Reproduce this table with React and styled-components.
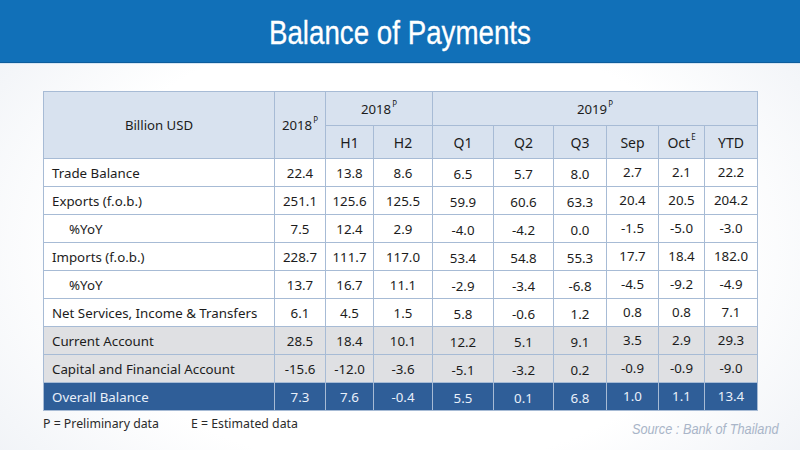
import React from 'react'
import styled, { createGlobalStyle } from 'styled-components'

const GlobalStyle = createGlobalStyle`
  html, body {
    margin: 0;
    padding: 0;
  }
  body {
    font-family: "Noto Sans", "DejaVu Sans", sans-serif;
    color: #1c1c1c;
  }
`

const Page = styled.div`
  width: 800px;
  height: 450px;
  overflow: hidden;
  display: flex;
  flex-direction: column;
  background: radial-gradient(ellipse 75% 90% at 50% 55%, #ffffff 55%, #e9edf3 100%);
`

const TitleBar = styled.header`
  height: 62px;
  flex: none;
  background: #1170b8;
  border-bottom: 1px solid #0d5d9c;
  box-shadow: 0 1px 0 #d6e6f4;
  display: flex;
  align-items: center;
  justify-content: center;
`

const Title = styled.h1`
  margin: 0;
  font-family: "Liberation Sans", Arial, sans-serif;
  font-weight: 400;
  font-size: 33px;
  color: #ffffff;
  transform: scaleX(0.84);
  line-height: 1;
  padding-top: 2px;
  -webkit-text-stroke: 0.3px #ffffff;
`

const Content = styled.main`
  flex: 1;
  padding: 28px 21px 0 43px;
  display: flex;
  flex-direction: column;
`

const Table = styled.table`
  width: 714px;
  border-collapse: collapse;
  table-layout: fixed;
  border: 1px solid #9fb4cf;
`

const HeadCell = styled.th`
  background: #d8e2ef;
  border: 1px solid #a7bbd5;
  font-weight: 400;
  font-size: ${({ big }) => (big ? '14px' : '13.2px')};
  height: ${({ tall }) => (tall ? '33px' : '32px')};
  padding: 0;
  text-align: center;
  vertical-align: middle;
  color: #1c1c1c;
`

const Sup = styled.sup`
  font-size: 8px;
  vertical-align: top;
  position: relative;
  top: -2px;
  margin-left: 1px;
`

const Row = styled.tr`
  height: 28px;
  background: ${({ tone }) =>
    tone === 'gray' ? '#dfe0e3' : tone === 'blue' ? '#2f5e98' : '#ffffff'};
  color: ${({ tone }) => (tone === 'blue' ? '#e9f0fa' : '#1c1c1c')};
`

const Label = styled.td`
  border: 1px solid #a7bbd5;
  padding: 0 0 0 ${({ indent }) => (indent ? '25px' : '8px')};
  font-size: 13.3px;
  white-space: nowrap;
  vertical-align: middle;
`

const Num = styled.td`
  border: 1px solid #a7bbd5;
  text-align: center;
  vertical-align: middle;
  padding: ${({ shift }) => (shift > 0 ? `${shift}px 0 0` : shift < 0 ? `0 0 ${-shift}px` : '0')};
  font-size: 13.3px;
`

const Footer = styled.div`
  display: flex;
  justify-content: space-between;
  align-items: flex-start;
  padding-top: 4px;
`

const Notes = styled.div`
  display: flex;
  gap: 32px;
  font-size: 12.3px;
  color: #2a2a2a;
`

const Source = styled.div`
  font-family: "Liberation Sans", Arial, sans-serif;
  font-style: italic;
  font-size: 15px;
  color: #a9b5c8;
  transform: scaleX(0.85);
  transform-origin: right center;
  margin-top: 5px;
`

const widths = [231, 51, 48, 59, 61, 60, 53, 52, 46, 53]
// vertical nudges per number column (Q cols sit a little low, monthly a little high)
const shifts = [0, 0, 0, 3, 3, 3, -1, -1, -1]

const rows = [
  { label: 'Trade Balance', v: ['22.4', '13.8', '8.6', '6.5', '5.7', '8.0', '2.7', '2.1', '22.2'] },
  { label: 'Exports (f.o.b.)', v: ['251.1', '125.6', '125.5', '59.9', '60.6', '63.3', '20.4', '20.5', '204.2'] },
  { label: '%YoY', indent: true, v: ['7.5', '12.4', '2.9', '-4.0', '-4.2', '0.0', '-1.5', '-5.0', '-3.0'] },
  { label: 'Imports (f.o.b.)', v: ['228.7', '111.7', '117.0', '53.4', '54.8', '55.3', '17.7', '18.4', '182.0'] },
  { label: '%YoY', indent: true, v: ['13.7', '16.7', '11.1', '-2.9', '-3.4', '-6.8', '-4.5', '-9.2', '-4.9'] },
  { label: 'Net Services, Income & Transfers', v: ['6.1', '4.5', '1.5', '5.8', '-0.6', '1.2', '0.8', '0.8', '7.1'] },
  { label: 'Current Account', tone: 'gray', v: ['28.5', '18.4', '10.1', '12.2', '5.1', '9.1', '3.5', '2.9', '29.3'] },
  { label: 'Capital and Financial Account', tone: 'gray', v: ['-15.6', '-12.0', '-3.6', '-5.1', '-3.2', '0.2', '-0.9', '-0.9', '-9.0'] },
  { label: 'Overall Balance', tone: 'blue', v: ['7.3', '7.6', '-0.4', '5.5', '0.1', '6.8', '1.0', '1.1', '13.4'] },
]

export default function App() {
  return (
    <>
      <GlobalStyle />
      <Page>
        <TitleBar>
          <Title>Balance of Payments</Title>
        </TitleBar>
        <Content>
          <Table>
            <colgroup>
              {widths.map((w, i) => (
                <col key={i} style={{ width: w }} />
              ))}
            </colgroup>
            <thead>
              <tr>
                <HeadCell rowSpan={2}>Billion USD</HeadCell>
                <HeadCell rowSpan={2}>
                  2018<Sup>P</Sup>
                </HeadCell>
                <HeadCell colSpan={2} tall>
                  2018<Sup>P</Sup>
                </HeadCell>
                <HeadCell colSpan={6} tall>
                  2019<Sup>P</Sup>
                </HeadCell>
              </tr>
              <tr>
                <HeadCell big>H1</HeadCell>
                <HeadCell big>H2</HeadCell>
                <HeadCell big>Q1</HeadCell>
                <HeadCell big>Q2</HeadCell>
                <HeadCell big>Q3</HeadCell>
                <HeadCell big>Sep</HeadCell>
                <HeadCell big>
                  Oct<Sup>E</Sup>
                </HeadCell>
                <HeadCell big>YTD</HeadCell>
              </tr>
            </thead>
            <tbody>
              {rows.map((r, i) => (
                <Row key={i} tone={r.tone}>
                  <Label indent={r.indent}>{r.label}</Label>
                  {r.v.map((x, j) => (
                    <Num key={j} shift={shifts[j]}>
                      {x}
                    </Num>
                  ))}
                </Row>
              ))}
            </tbody>
          </Table>
          <Footer>
            <Notes>
              <span>P = Preliminary data</span>
              <span>E = Estimated data</span>
            </Notes>
            <Source>Source : Bank of Thailand</Source>
          </Footer>
        </Content>
      </Page>
    </>
  )
}
